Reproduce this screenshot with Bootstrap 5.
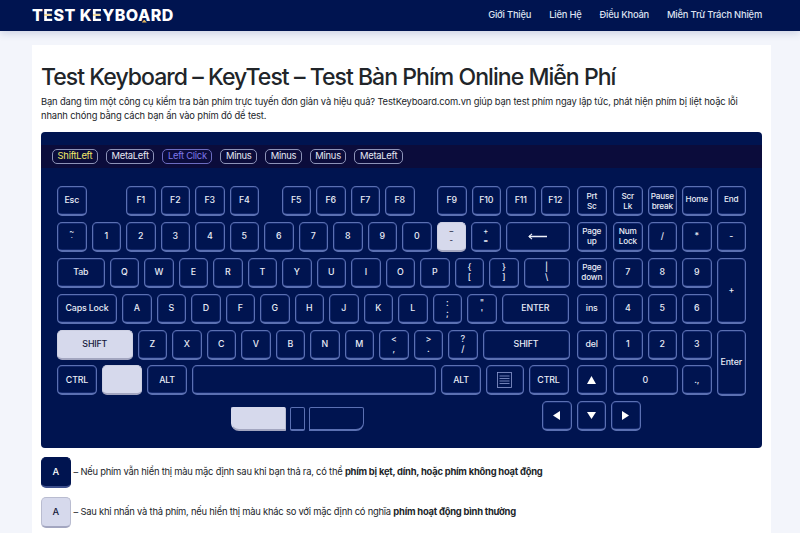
<!DOCTYPE html>
<html lang="vi">
<head>
<meta charset="utf-8">
<title>Test Keyboard</title>
<link href="https://cdn.jsdelivr.net/npm/bootstrap@5.3.0/dist/css/bootstrap.min.css" rel="stylesheet">
<style>
html,body{height:533px;overflow:hidden}
body{background:#f3f5fb;font-family:Inter,"Noto Sans",sans-serif;color:#212529}
.topbar{background:#001450;height:31px;padding:0 38px 0 32px;box-shadow:0 2px 8px rgba(40,60,130,.2)}
.logo-text{font-family:Inter,sans-serif;font-weight:800;font-size:16px;letter-spacing:.45px;color:#fff;line-height:1;padding:0;margin:0;position:relative;top:-1px}
.logo-text:hover{color:#fff}
.logo-e{background:linear-gradient(#fff 47%,#f1d79a 47%,#f1d79a 56%,#fff 56%);-webkit-background-clip:text;background-clip:text;color:transparent}
.logo-a{position:relative}
.logo-tip{position:absolute;left:50%;bottom:2px;width:5px;height:3px;margin-left:-2.5px;background:#e7b85a;clip-path:polygon(50% 0,100% 100%,0 100%)}
.toplinks{gap:18px;flex-direction:row}
.toplinks .nav-link{padding:0;font-size:9.4px;letter-spacing:-.21px;font-weight:500;color:#dde2f0;line-height:1;position:relative;top:-1px}
.sheet{background:#fff;margin:14px 29px 0 32px;padding:18px 9px 0 9px;height:488px}
.sheet h1{font-size:23px;letter-spacing:-.95px;font-weight:500;margin:0 0 4px;line-height:28px;color:#212529}
.intro{font-size:9.4px;letter-spacing:-.15px;line-height:14px;margin:0 0 9px;color:#212529}
.board{background:#001450;border-radius:4px;height:316px;overflow:hidden;padding-top:13px}
.strip{background:#0b0c3b;height:23px;padding:0 11px;gap:8px}
.chip{border:1px solid #8d93b8;border-radius:5px;font-size:9.4px;letter-spacing:-.26px;height:14.5px;padding:0 4.6px;color:#e6e8f3;line-height:12.5px;background:#0b0c3b}
.chip.yellow{color:#f2ea6a}
.chip.violet{color:#7f78ea;border-color:#6c6cc0}
.keys{padding:18px 0 0 16px;gap:7.5px}
.mainblock{width:512.5px;gap:5.9px}
.keyrow{gap:5px}
.kkey{width:29.5px;height:30px;flex:none;border:1.5px solid #5b70b2;border-bottom-width:2px;border-radius:5px;background:#001450;color:#e9ecf6;font-size:8.8px;letter-spacing:-.15px;font-weight:500;line-height:10.5px;text-align:center;box-shadow:inset 0 0 0 .5px #273d88}
.kkey.on{background:#d6d9ec;border-color:#cdd0e3;border-bottom-color:#a3a6c0;color:#14183a;box-shadow:none}
.tight{font-size:7.5px;line-height:9px}
.gap-a{margin-left:34.5px}
.gap-b{margin-left:17.5px}
.w47{width:47.5px}.w60{width:60px}.w64{width:64.5px}.w46{width:46px}.w68{width:67.5px}.w75{width:75.5px}.w87{width:87px}.w40{width:40px}.w244{width:244px}.w37{width:37.5px}
.navgrid{display:grid;grid-template-columns:36px 34.5px 34.5px 34.5px 29.5px;grid-template-rows:repeat(6,30px);row-gap:5.9px}
.wide0{grid-column:span 2;width:64.5px}
.tall{height:66px;grid-row:span 2}
.tiny{font-size:8.2px;letter-spacing:-.2px;line-height:10px}
.bottomrow{padding:6px 0 0 190px}
.mouse-l,.mouse-m,.mouse-r{height:24px;margin-top:6px;border:1.5px solid #5b70b2;border-bottom-width:2px;background:#001450;flex:none;border-radius:2px 2px 0 0}
.mouse-l{width:55px;background:#d6d9ec;border-color:#d6d9ec;border-bottom-color:#a3a6c0;border-right-color:#b9bcd0;border-bottom-left-radius:8px}
.mouse-m{width:15px;margin-left:4px;border-radius:2px}
.mouse-r{width:54.500px;margin-left:4px;border-bottom-right-radius:8px}
.arrowset{gap:5px;margin-left:178.5px}
.legend{margin-top:9px;gap:9.7px}
.legend-row{gap:3px;font-size:9.4px;letter-spacing:-.22px;line-height:12px;color:#212529}
.legend-row b{font-weight:700}
.lg-key{width:29.5px;height:30.5px;flex:none;border-radius:5px;font-size:9.4px;font-weight:500}
.lg-dark{background:#001450;border:1px solid #001450;border-bottom:2px solid #3d4f8c;color:#fff}
.lg-light{background:#d6d9ec;border:1px solid #b9bcd0;border-bottom:2px solid #a3a6c0;color:#14183a}
</style>
</head>
<body>
<nav class="navbar topbar d-flex justify-content-between align-items-center">
  <a class="navbar-brand logo-text" href="#">T<span class="logo-e">E</span>ST K<span class="logo-e">E</span>YBO<span class="logo-a">A<span class="logo-tip"></span></span>RD</a>
  <ul class="nav toplinks">
    <li class="nav-item"><a class="nav-link" href="#">Giới Thiệu</a></li>
    <li class="nav-item"><a class="nav-link" href="#">Liên Hệ</a></li>
    <li class="nav-item"><a class="nav-link" href="#">Điều Khoản</a></li>
    <li class="nav-item"><a class="nav-link" href="#">Miễn Trừ Trách Nhiệm</a></li>
  </ul>
</nav>
<main class="sheet">
  <h1>Test Keyboard – KeyTest – Test Bàn Phím Online Miễn Phí</h1>
  <p class="intro">Bạn đang tìm một công cụ kiểm tra bàn phím trực tuyến đơn giản và hiệu quả? TestKeyboard.com.vn giúp bạn test phím ngay lập tức, phát hiện phím bị liệt hoặc lỗi<br>nhanh chóng bằng cách bạn ấn vào phím đó để test.</p>
  <section class="board">
    <div class="strip d-flex align-items-center">
      <span class="chip yellow">ShiftLeft</span><span class="chip">MetaLeft</span><span class="chip violet">Left Click</span><span class="chip">Minus</span><span class="chip">Minus</span><span class="chip">Minus</span><span class="chip">MetaLeft</span>
    </div>
    <div class="keys d-flex">
      <div class="mainblock d-flex flex-column">
        <div class="keyrow d-flex">
          <div class="kkey d-flex align-items-center justify-content-center">Esc</div>
          <div class="kkey gap-a d-flex align-items-center justify-content-center">F1</div>
          <div class="kkey d-flex align-items-center justify-content-center">F2</div>
          <div class="kkey d-flex align-items-center justify-content-center">F3</div>
          <div class="kkey d-flex align-items-center justify-content-center">F4</div>
          <div class="kkey gap-b d-flex align-items-center justify-content-center">F5</div>
          <div class="kkey d-flex align-items-center justify-content-center">F6</div>
          <div class="kkey d-flex align-items-center justify-content-center">F7</div>
          <div class="kkey d-flex align-items-center justify-content-center">F8</div>
          <div class="kkey gap-b d-flex align-items-center justify-content-center">F9</div>
          <div class="kkey d-flex align-items-center justify-content-center">F10</div>
          <div class="kkey d-flex align-items-center justify-content-center">F11</div>
          <div class="kkey d-flex align-items-center justify-content-center">F12</div>
        </div>
        <div class="keyrow d-flex">
          <div class="kkey tight d-flex align-items-center justify-content-center">~<br>`</div>
          <div class="kkey d-flex align-items-center justify-content-center">1</div>
          <div class="kkey d-flex align-items-center justify-content-center">2</div>
          <div class="kkey d-flex align-items-center justify-content-center">3</div>
          <div class="kkey d-flex align-items-center justify-content-center">4</div>
          <div class="kkey d-flex align-items-center justify-content-center">5</div>
          <div class="kkey d-flex align-items-center justify-content-center">6</div>
          <div class="kkey d-flex align-items-center justify-content-center">7</div>
          <div class="kkey d-flex align-items-center justify-content-center">8</div>
          <div class="kkey d-flex align-items-center justify-content-center">9</div>
          <div class="kkey d-flex align-items-center justify-content-center">0</div>
          <div class="kkey on tight d-flex align-items-center justify-content-center">–<br>-</div>
          <div class="kkey tight d-flex align-items-center justify-content-center">+<br>=</div>
          <div class="kkey w64 d-flex align-items-center justify-content-center">
            <svg width="19" height="7" viewBox="0 0 19 7" fill="none" stroke="#f1f3fa"><path d="M1 3.500h18" stroke-width="1.300"/><path d="M4 .8L1 3.500l3 2.700" stroke-width="1.100"/></svg>
          </div>
        </div>
        <div class="keyrow d-flex">
          <div class="kkey w47 d-flex align-items-center justify-content-center">Tab</div>
          <div class="kkey d-flex align-items-center justify-content-center">Q</div>
          <div class="kkey d-flex align-items-center justify-content-center">W</div>
          <div class="kkey d-flex align-items-center justify-content-center">E</div>
          <div class="kkey d-flex align-items-center justify-content-center">R</div>
          <div class="kkey d-flex align-items-center justify-content-center">T</div>
          <div class="kkey d-flex align-items-center justify-content-center">Y</div>
          <div class="kkey d-flex align-items-center justify-content-center">U</div>
          <div class="kkey d-flex align-items-center justify-content-center">I</div>
          <div class="kkey d-flex align-items-center justify-content-center">O</div>
          <div class="kkey d-flex align-items-center justify-content-center">P</div>
          <div class="kkey d-flex align-items-center justify-content-center">{<br>[</div>
          <div class="kkey d-flex align-items-center justify-content-center">}<br>]</div>
          <div class="kkey w46 d-flex align-items-center justify-content-center">|<br>\</div>
        </div>
        <div class="keyrow d-flex">
          <div class="kkey w60 d-flex align-items-center justify-content-center">Caps Lock</div>
          <div class="kkey d-flex align-items-center justify-content-center">A</div>
          <div class="kkey d-flex align-items-center justify-content-center">S</div>
          <div class="kkey d-flex align-items-center justify-content-center">D</div>
          <div class="kkey d-flex align-items-center justify-content-center">F</div>
          <div class="kkey d-flex align-items-center justify-content-center">G</div>
          <div class="kkey d-flex align-items-center justify-content-center">H</div>
          <div class="kkey d-flex align-items-center justify-content-center">J</div>
          <div class="kkey d-flex align-items-center justify-content-center">K</div>
          <div class="kkey d-flex align-items-center justify-content-center">L</div>
          <div class="kkey d-flex align-items-center justify-content-center">:<br>;</div>
          <div class="kkey d-flex align-items-center justify-content-center">"<br>'</div>
          <div class="kkey w68 d-flex align-items-center justify-content-center">ENTER</div>
        </div>
        <div class="keyrow d-flex">
          <div class="kkey w75 on d-flex align-items-center justify-content-center">SHIFT</div>
          <div class="kkey d-flex align-items-center justify-content-center">Z</div>
          <div class="kkey d-flex align-items-center justify-content-center">X</div>
          <div class="kkey d-flex align-items-center justify-content-center">C</div>
          <div class="kkey d-flex align-items-center justify-content-center">V</div>
          <div class="kkey d-flex align-items-center justify-content-center">B</div>
          <div class="kkey d-flex align-items-center justify-content-center">N</div>
          <div class="kkey d-flex align-items-center justify-content-center">M</div>
          <div class="kkey d-flex align-items-center justify-content-center">&lt;<br>,</div>
          <div class="kkey d-flex align-items-center justify-content-center">&gt;<br>.</div>
          <div class="kkey d-flex align-items-center justify-content-center">?<br>/</div>
          <div class="kkey w87 d-flex align-items-center justify-content-center">SHIFT</div>
        </div>
        <div class="keyrow d-flex">
          <div class="kkey w40 d-flex align-items-center justify-content-center">CTRL</div>
          <div class="kkey w40 on"></div>
          <div class="kkey w40 d-flex align-items-center justify-content-center">ALT</div>
          <div class="kkey w244"></div>
          <div class="kkey w40 d-flex align-items-center justify-content-center">ALT</div>
          <div class="kkey w37 d-flex align-items-center justify-content-center">
            <svg width="15" height="16" viewBox="0 0 15 16" fill="none" stroke="#8c9bd0" stroke-width=".8"><rect x=".5" y=".5" width="14" height="15"/><path d="M2.500 4h10M2.500 6.500h10M2.500 9h10M2.500 11.500h10"/></svg>
          </div>
          <div class="kkey w40 d-flex align-items-center justify-content-center">CTRL</div>
        </div>
      </div>
      <div class="navgrid">
        <div class="kkey tiny d-flex align-items-center justify-content-center">Prt<br>Sc</div>
        <div class="kkey tiny d-flex align-items-center justify-content-center">Scr<br>Lk</div>
        <div class="kkey tiny d-flex align-items-center justify-content-center">Pause<br>break</div>
        <div class="kkey tiny pb-1 d-flex align-items-center justify-content-center">Home</div>
        <div class="kkey tiny pb-1 d-flex align-items-center justify-content-center">End</div>
        <div class="kkey tiny d-flex align-items-center justify-content-center">Page<br>up</div>
        <div class="kkey tiny d-flex align-items-center justify-content-center">Num<br>Lock</div>
        <div class="kkey d-flex align-items-center justify-content-center">/</div>
        <div class="kkey d-flex align-items-center justify-content-center">*</div>
        <div class="kkey d-flex align-items-center justify-content-center">-</div>
        <div class="kkey tiny d-flex align-items-center justify-content-center">Page<br>down</div>
        <div class="kkey d-flex align-items-center justify-content-center">7</div>
        <div class="kkey d-flex align-items-center justify-content-center">8</div>
        <div class="kkey d-flex align-items-center justify-content-center">9</div>
        <div class="kkey tall d-flex align-items-center justify-content-center">+</div>
        <div class="kkey d-flex align-items-center justify-content-center">ins</div>
        <div class="kkey d-flex align-items-center justify-content-center">4</div>
        <div class="kkey d-flex align-items-center justify-content-center">5</div>
        <div class="kkey d-flex align-items-center justify-content-center">6</div>
        <div class="kkey d-flex align-items-center justify-content-center">del</div>
        <div class="kkey d-flex align-items-center justify-content-center">1</div>
        <div class="kkey d-flex align-items-center justify-content-center">2</div>
        <div class="kkey d-flex align-items-center justify-content-center">3</div>
        <div class="kkey tall d-flex align-items-center justify-content-center">Enter</div>
        <div class="kkey d-flex align-items-center justify-content-center"><svg width="9" height="8" viewBox="0 0 9 8"><path d="M4.500 0L9 8H0z" fill="#fff"/></svg></div>
        <div class="kkey wide0 d-flex align-items-center justify-content-center">0</div>
        <div class="kkey d-flex align-items-center justify-content-center">.,</div>
      </div>
    </div>
    <div class="bottomrow d-flex align-items-start">
      <div class="mouse-l"></div>
      <div class="mouse-m"></div>
      <div class="mouse-r"></div>
      <div class="arrowset d-flex">
        <div class="kkey d-flex align-items-center justify-content-center"><svg width="7" height="9" viewBox="0 0 7 9"><path d="M7 0v9L0 4.500z" fill="#fff"/></svg></div>
        <div class="kkey d-flex align-items-center justify-content-center"><svg width="9" height="7" viewBox="0 0 9 7"><path d="M0 0h9L4.500 7z" fill="#fff"/></svg></div>
        <div class="kkey d-flex align-items-center justify-content-center"><svg width="7" height="9" viewBox="0 0 7 9"><path d="M0 0v9l7-4.500z" fill="#fff"/></svg></div>
      </div>
    </div>
  </section>
  <div class="legend d-flex flex-column">
    <div class="legend-row d-flex align-items-center">
      <div class="lg-key lg-dark d-flex align-items-center justify-content-center">A</div>
      <div>– Nếu phím vẫn hiển thị màu mặc định sau khi bạn thả ra, có thể <b>phím bị kẹt, dính, hoặc phím không hoạt động</b></div>
    </div>
    <div class="legend-row d-flex align-items-center">
      <div class="lg-key lg-light d-flex align-items-center justify-content-center">A</div>
      <div>– Sau khi nhấn và thả phím, nếu hiển thị màu khác so với mặc định có nghĩa <b>phím hoạt động bình thường</b></div>
    </div>
  </div>
</main>
<script src="https://cdn.jsdelivr.net/npm/bootstrap@5.3.0/dist/js/bootstrap.bundle.min.js"></script>
</body>
</html>
